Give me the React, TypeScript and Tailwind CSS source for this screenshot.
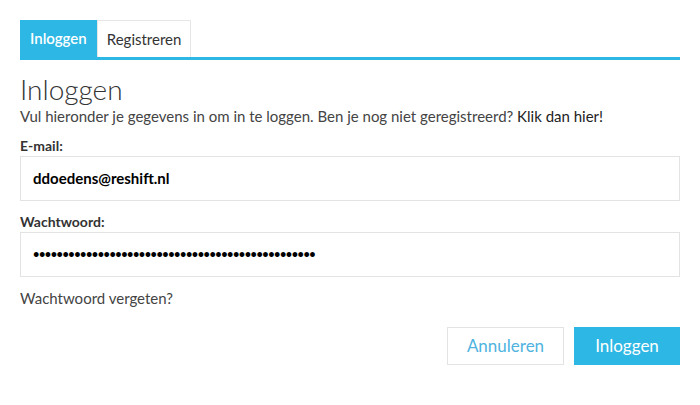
import React from "react";

export default function App() {
  const dots = "•".repeat(48);
  return (
    <div
      className="min-h-[405px] w-[700px] bg-white px-5 pt-5 text-[#333]"
      style={{ fontFamily: '"Lato", "Open Sans", sans-serif' }}
    >
      {/* tabs */}
      <div className="flex border-b-[3px] border-[#2db7e4]">
        <div className="flex h-[37px] items-center bg-[#2db7e4] px-[10px] text-[15px] font-semibold text-white">
          Inloggen
        </div>
        <div className="flex h-[37px] items-center border border-b-0 border-[#e6e6e6] px-[9px] text-[15px] text-[#333]">
          Registreren
        </div>
      </div>

      <h1 className="mt-[12px] text-[28px] font-light leading-[34px] text-[#333]">Inloggen</h1>
      <p className="text-[15px] leading-[20px] text-[#444]">
        Vul hieronder je gegevens in om in te loggen. Ben je nog niet geregistreerd? <span className="text-[#222]">Klik dan hier!</span>
      </p>

      <label className="mt-[10px] block text-[14px] font-bold leading-[20px] text-[#333]">E-mail:</label>
      <div className="flex h-[45px] items-center border border-[#e3e3e3] px-[12px] text-[15px] font-bold text-black">
        ddoedens@reshift.nl
      </div>

      <label className="mt-[11px] block text-[14px] font-bold leading-[20px] text-[#333]">Wachtwoord:</label>
      <div className="flex h-[45px] items-center border border-[#e3e3e3] px-[12px] text-[11px] font-bold tracking-[-0.5px] text-black">
        {dots}
      </div>

      <div className="mt-[11px] text-[15px] leading-[20px] text-[#444]">Wachtwoord vergeten?</div>

      <div className="mt-[19px] flex justify-end gap-[10px]">
        <button className="h-[38px] w-[117px] border border-[#e3e3e3] bg-white text-[17px] text-[#4fb3e0]">
          Annuleren
        </button>
        <button className="h-[38px] w-[106px] bg-[#2db7e4] text-[17px] text-white">Inloggen</button>
      </div>
    </div>
  );
}
